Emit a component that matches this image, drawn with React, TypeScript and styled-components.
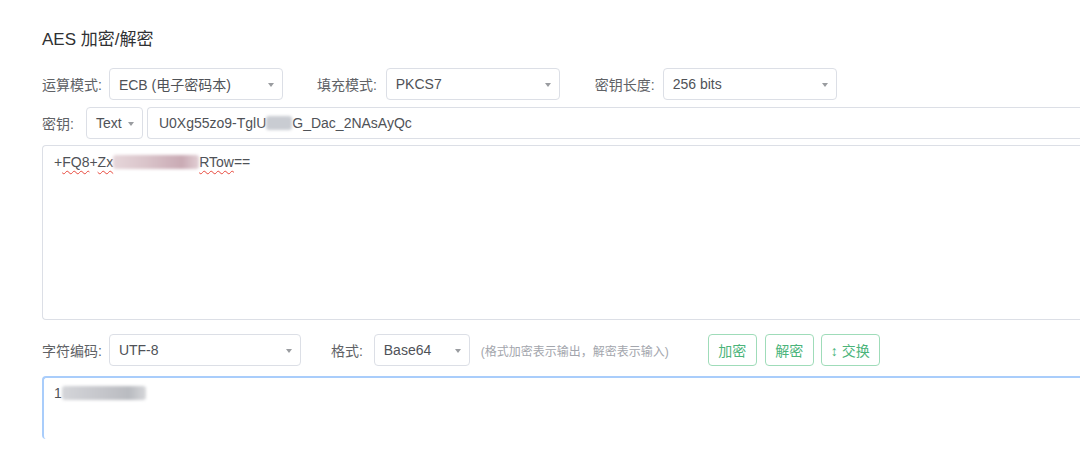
import React from 'react'
import styled, { createGlobalStyle } from 'styled-components'

const GlobalStyle = createGlobalStyle`
    html, body {
        margin: 0;
        padding: 0;
        background: #fff;
        overflow: hidden;
    }
    body {
        font-family: "Liberation Sans", Arial, "Noto Sans CJK SC", sans-serif;
        color: #606266;
    }
`

const Page = styled.div`
    width: 1080px;
    padding: 28px 0 0 42px;
    box-sizing: border-box;
    height: 472px;
    overflow: hidden;
`

const Title = styled.h3`
    margin: 0;
    font-size: 17px;
    line-height: 24px;
    font-weight: 400;
    color: #303133;
`

const Row = styled.div<{ $top: number }>`
    display: flex;
    align-items: center;
    margin-top: ${p => p.$top}px;
    height: 32px;
`

const Label = styled.span<{ $lead?: number; $gap?: number }>`
    font-size: 14px;
    color: #606266;
    white-space: nowrap;
    margin-left: ${p => p.$lead || 0}px;
    margin-right: ${p => (p.$gap === undefined ? 8 : p.$gap)}px;
`

const SelectBox = styled.div<{ $w: number }>`
    position: relative;
    width: ${p => p.$w}px;
    height: 32px;
    box-sizing: border-box;
    border: 1px solid #dcdfe6;
    border-radius: 4px;
    padding-left: 9px;
    display: flex;
    align-items: center;
    font-size: 14px;
    color: #4f5257;
    flex-shrink: 0;
`

const Caret = styled.span`
    position: absolute;
    right: 8px;
    top: 14px;
    width: 0;
    height: 0;
    border-left: 3.5px solid transparent;
    border-right: 3.5px solid transparent;
    border-top: 4px solid #9a9ca0;
`

const KeyInput = styled.div`
    flex: 1;
    height: 32px;
    margin-left: 4px;
    box-sizing: border-box;
    border: 1px solid #dcdfe6;
    border-right: none;
    border-radius: 4px 0 0 4px;
    padding-left: 11px;
    display: flex;
    align-items: center;
    font-size: 14px;
    color: #4f5257;
`

const Mask = styled.span<{ $w: number; $tone: string }>`
    display: inline-block;
    width: ${p => p.$w}px;
    height: 14px;
    vertical-align: -2px;
    background: ${p => p.$tone};
    filter: blur(1.5px);
    border-radius: 3px;
`

const TextArea = styled.div<{ $h: number; $focus?: boolean }>`
    margin-top: ${p => (p.$focus ? 10 : 6)}px;
    height: ${p => p.$h}px;
    box-sizing: border-box;
    border: ${p => (p.$focus ? '2px solid #a9cdfb' : '1px solid #dcdfe6')};
    border-right: none;
    ${p => p.$focus && 'border-bottom: none;'}
    border-radius: 4px 0 0 4px;
    padding: ${p => (p.$focus ? '5px 10px' : '6px 11px')};
    font-size: 14px;
    line-height: 21px;
    color: #4f5257;
`

const Spell = styled.span`
    text-decoration: underline wavy #e8483c;
    text-decoration-thickness: 1px;
    text-underline-offset: 3px;
`

const Hint = styled.span`
    font-size: 12px;
    color: #a3a6ad;
    margin-left: 11px;
    white-space: nowrap;
`

const Btn = styled.button<{ $lead: number; $w: number }>`
    margin-left: ${p => p.$lead}px;
    width: ${p => p.$w}px;
    height: 32px;
    box-sizing: border-box;
    border: 1px solid #9fdcb9;
    border-radius: 4px;
    background: #fff;
    color: #4bb47a;
    font-size: 14px;
    font-family: inherit;
    padding: 0;
    cursor: pointer;
`

const Select: React.FC<{ w: number; value: string }> = ({ w, value }) => (
    <SelectBox $w={w}>
        {value}
        <Caret />
    </SelectBox>
)

const App: React.FC = () => {
    return (
        <Page>
            <GlobalStyle />
            <Title>AES 加密/解密</Title>
            <Row $top={16}>
                <Label $gap={7}>运算模式:</Label>
                <Select w={174} value="ECB (电子密码本)" />
                <Label $lead={34} $gap={9}>填充模式:</Label>
                <Select w={174} value="PKCS7" />
                <Label $lead={35} $gap={8}>密钥长度:</Label>
                <Select w={174} value="256 bits" />
            </Row>
            <Row $top={7}>
                <Label $gap={12}>密钥:</Label>
                <Select w={57} value="Text" />
                <KeyInput>
                    U0Xg55zo9-TglU<Mask $w={26} $tone="#c9ccd2" />G_Dac_2NAsAyQc
                </KeyInput>
            </Row>
            <TextArea $h={175}>
                +<Spell>FQ8</Spell>+<Spell>Zx</Spell>
                <Mask $w={86} $tone="linear-gradient(90deg,#e6d6da,#d9c3c9 40%,#c9aab4 80%,#e2cfd4)" />
                <Spell>RTow</Spell>==
            </TextArea>
            <Row $top={14}>
                <Label $gap={7}>字符编码:</Label>
                <Select w={192} value="UTF-8" />
                <Label $lead={30} $gap={11}>格式:</Label>
                <Select w={96} value="Base64" />
                <Hint>(格式加密表示输出，解密表示输入)</Hint>
                <Btn $lead={39} $w={49}>加密</Btn>
                <Btn $lead={8} $w={49}>解密</Btn>
                <Btn $lead={7} $w={59}>↕ 交换</Btn>
            </Row>
            <TextArea $h={63} $focus>
                1<Mask $w={84} $tone="linear-gradient(90deg,#d4d5d9,#c4c5ca 50%,#b9bbc0 80%,#d6d7da)" />
            </TextArea>
        </Page>
    )
}

export default App
